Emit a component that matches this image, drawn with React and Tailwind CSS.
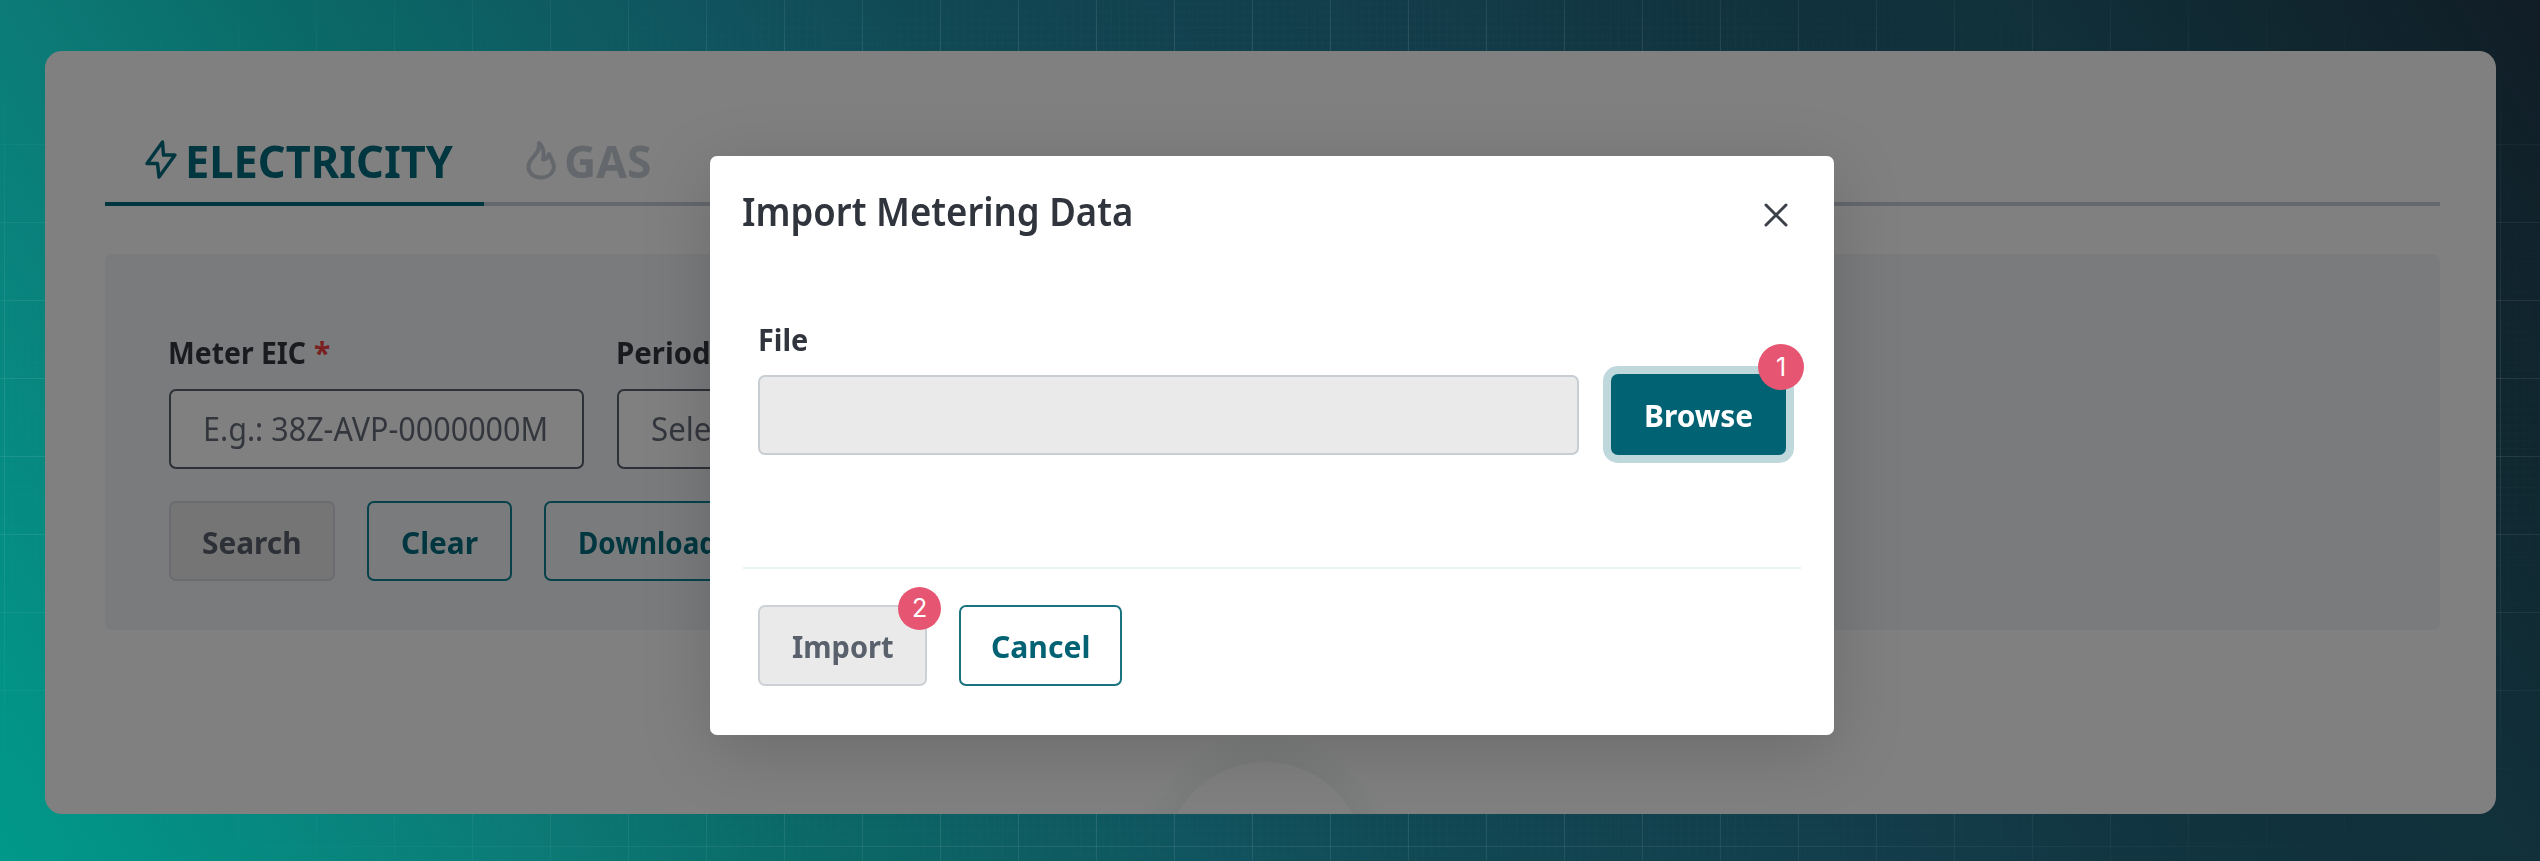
import { useLayoutEffect, useRef } from "react";

// Text set to an exact width: the natural width is measured, then scaled horizontally.
function Fit({ w, className = "", children }) {
  const ref = useRef(null);
  useLayoutEffect(() => {
    const el = ref.current;
    el.style.transform = `scaleX(${w / el.offsetWidth})`;
  }, [w]);
  return (
    <span className={`block shrink-0 leading-none ${className}`} style={{ width: w }}>
      <span ref={ref} className="inline-block origin-left whitespace-nowrap align-top leading-none">
        {children}
      </span>
    </span>
  );
}

const Bolt = () => (
  <svg viewBox="0 0 36 44" className="h-11 w-9 shrink-0" fill="none" stroke="#00363f" strokeWidth="3.4" strokeLinejoin="round">
    <path d="M19.5 4 L4 25.5 H14.5 L16 39 L32 17 H20.5 Z" />
  </svg>
);

const Flame = () => (
  <svg viewBox="0 0 32 44" className="h-11 w-8 shrink-0" fill="none" stroke="#64676c" strokeWidth="4" strokeLinejoin="round">
    <path d="M14 5 C15 14 9 17 5.2 23 C0.5 32 6.500 39.500 16 39.500 C25.500 39.500 31 32 28 25 C27 21 25.500 19 24 16 C23 19.500 21 21.500 18 21.500 C19.500 14.500 18.500 9 14 5 Z" />
  </svg>
);

function Badge({ className, children }) {
  return (
    <span className={`absolute flex items-center justify-center rounded-full bg-[#e65672] font-['Inter',sans-serif] font-normal leading-none text-white ${className}`}>
      {children}
    </span>
  );
}

function Button({ className, textW, children }) {
  return (
    <button className={`relative flex shrink-0 items-center justify-center rounded-[7px] border-2 pt-0.5 text-[31px] font-bold ${className}`}>
      <Fit w={textW}>{children}</Fit>
    </button>
  );
}

function Field({ label, labelW, required, value, valueW }) {
  return (
    <div className="w-[415px]">
      <div className="flex gap-2 text-[30px] font-bold leading-none text-[#191b1f]">
        <Fit w={labelW} className="-ml-px">{label}</Fit>
        {required && <span className="leading-none text-[#7a1f22]">*</span>}
      </div>
      <div className="mt-[21px] flex h-20 items-center rounded-[7px] border-2 border-[#2d3036] bg-[#808080] pb-px pl-8 text-[33px] font-normal text-[#33373d]">
        <Fit w={valueW}>{value}</Fit>
      </div>
    </div>
  );
}

function Dialog() {
  return (
    <section className="absolute left-[710px] top-[156px] h-[579px] w-[1124px] rounded-[7px] bg-white pt-[35px] text-[#30343c] shadow-[0_16px_70px_rgba(0,0,0,0.17)]">
      <header className="flex items-start justify-between pl-8 pr-[46px] text-[39px] font-semibold">
        <Fit w={391}>Import Metering Data</Fit>
        <svg viewBox="0 0 24 24" className="mt-3 size-6 shrink-0" stroke="#3c4049" strokeWidth="3" strokeLinecap="round">
          <path d="M2 2 L22 22 M22 2 L2 22" />
        </svg>
      </header>
      <div className="mt-[95px] px-12">
        <Fit w={50} className="h-[30px] text-[30px] font-bold">File</Fit>
        <div className="mt-[19px] flex">
          <div className="mr-8 mt-px h-20 w-[821px] rounded-[7px] border-2 border-[#c8cdd3] bg-[#eaeaea]" />
          <Button textW={109} className="h-[81px] w-[175px] border-[#006272] bg-[#006272] text-white shadow-[0_0_0_8px_#bfd8dc]">
            Browse
          </Button>
        </div>
      </div>
      <div className="mx-[33px] mt-28 h-0.5 bg-[#e9f3ee]" />
      <footer className="mt-9 flex gap-8 px-12">
        <Button textW={102} className="h-[81px] w-[169px] border-[#cdd1d6] bg-[#eaeaea] text-[#59616c]">Import</Button>
        <Button textW={99} className="h-[81px] w-[163px] border-[#1b7380] bg-white text-[#006272]">Cancel</Button>
      </footer>
      <Badge className="left-[1048px] top-[188px] size-[46px] text-[25px]">1</Badge>
      <Badge className="left-[188px] top-[431px] size-[43px] text-[25px]">2</Badge>
    </section>
  );
}

export default function App() {
  return (
    <div className="relative h-[861px] w-[2540px] overflow-hidden bg-[linear-gradient(59deg,#00998a_0%,#0c7b77_17%,#0a6a67_26%,#10535e_40%,#104853_47%,#133c4a_62%,#10323c_75%,#11303a_83%,#10272f_91%,#111d27_100%)] px-[45px] pt-[51px] font-['Noto_Sans',sans-serif]">
      <div className="absolute inset-0 bg-[linear-gradient(to_right,rgba(255,255,255,0.2)_1px,transparent_1px),linear-gradient(to_bottom,rgba(255,255,255,0.2)_1px,transparent_1px),linear-gradient(to_right,rgba(255,255,255,0.04)_1px,transparent_1px),linear-gradient(to_bottom,rgba(255,255,255,0.04)_1px,transparent_1px)] bg-[length:78px_78px,78px_78px,7.8px_7.8px,7.8px_7.8px] [background-position:4px_-12px] [mask-image:radial-gradient(ellipse_at_center,black_35%,transparent_92%)]" />

      <main className="relative h-[763px] w-[2451px] overflow-hidden rounded-[17px] bg-[#808080] pl-[60px] pr-14 pt-[82px]">
        <nav className="flex h-[73px] text-[45px] font-bold">
          <div className="flex w-[379px] items-start gap-1.5 border-b-4 border-[#00363f] pl-[38px] pt-[5px] text-[#00363f]">
            <Bolt />
            <Fit w={268}>ELECTRICITY</Fit>
          </div>
          <div className="flex flex-1 items-start gap-[7px] border-b-4 border-[#64676c] pl-[41px] pt-[5px] text-[#64676c]">
            <Flame />
            <Fit w={88}>GAS</Fit>
          </div>
        </nav>

        <div className="mt-12 h-[376px] rounded-[7px] bg-[#7a7b7d] px-16 pt-[84px]">
          <div className="flex gap-[33px]">
            <Field label="Meter EIC" labelW={138} required value="E.g.: 38Z-AVP-0000000M" valueW={345} />
            <Field label="Period" labelW={95} value="Select" valueW={87} />
          </div>
          <div className="mt-8 flex gap-8">
            <Button textW={100} className="h-20 w-[166px] border-[#6a6c6f] bg-[#757575] text-[#2d3137]">Search</Button>
            <Button textW={77} className="h-20 w-[145px] border-[#07424b] text-[#00363f]">Clear</Button>
            <Button textW={139} className="h-20 w-[207px] border-[#07424b] text-[#00363f]">Download</Button>
          </div>
        </div>

        <div className="absolute left-[1080px] top-[671px] size-[280px] rounded-full bg-[radial-gradient(circle,transparent_99.5px,#797c7b_100.5px,#7b7e7d_112px,#808080_132px)]" />
      </main>

      <Dialog />
    </div>
  );
}
